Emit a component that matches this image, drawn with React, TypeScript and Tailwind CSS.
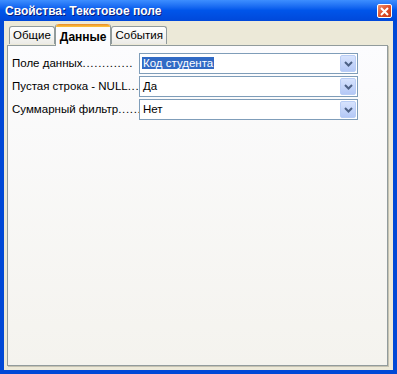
import React from "react";

const Chevron = () => (
  <svg width="9" height="6" viewBox="0 0 9 6">
    <polyline points="1,1 4.5,4.5 8,1" fill="none" stroke="#4D6185" strokeWidth="2" />
  </svg>
);

const Combo = ({ value, selected }: { value: string; selected?: boolean }) => (
  <div className="flex h-[21px] w-[219px] items-center border border-[#7F9DB9] bg-white pl-[2px] pr-[1px]">
    <div className="flex-1 overflow-hidden whitespace-nowrap">
      <span className={selected ? "bg-[#316AC5] px-[1px] text-white" : "px-[1px] text-black"}>{value}</span>
    </div>
    <div className="flex h-[17px] w-[16px] items-center justify-center rounded-[2px] border border-[#B9CDF5] bg-gradient-to-b from-[#D7E3FD] to-[#B4C8F6]">
      <Chevron />
    </div>
  </div>
);

const Row = ({ label, dots, value, selected }: { label: string; dots: string; value: string; selected?: boolean }) => (
  <div className="flex items-center">
    <div className="w-[127px] whitespace-nowrap pt-[1px] text-black">
      {label}
      <span className="tracking-[0.7px]">{dots}</span>
    </div>
    <Combo value={value} selected={selected} />
  </div>
);

export default function App() {
  return (
    <div
      className="flex h-[374px] w-[397px] flex-col overflow-hidden bg-[#0054E3] text-[11.5px]"
      style={{ fontFamily: '"Liberation Sans", Arial, sans-serif' }}
    >
      <div className="flex h-[21px] shrink-0 items-center justify-between bg-gradient-to-b from-[#3D8EFF] via-[#0055EA] to-[#0048DA] pl-[5px] pr-[5px]">
        <span className="text-[12px] font-bold text-white [text-shadow:1px_1px_0_#0A1E7A]">Свойства: Текстовое поле</span>
        <div className="mt-[1px] flex h-[14px] w-[15px] items-center justify-center rounded-[2px] border border-white bg-gradient-to-br from-[#F0906C] via-[#E0502A] to-[#C83A14]">
          <svg width="9" height="9" viewBox="0 0 9 9">
            <path d="M1 1 L8 8 M8 1 L1 8" stroke="white" strokeWidth="2" />
          </svg>
        </div>
      </div>
      <div className="flex flex-1 border-x-[4px] border-b-[4px] border-x-[#0048D6] border-b-[#0048D6]">
        <div className="flex flex-1 flex-col bg-[#ECE9D8] pb-[4px] pl-[3px] pr-[5px] pt-[2px]">
          <div className="relative z-10 flex h-[22px] items-end pl-[2px]">
            <div className="mb-[1px] flex h-[18px] items-center rounded-t-[3px] border border-b-0 border-[#919B9C] bg-gradient-to-b from-white to-[#ECEBE6] px-[3px] text-black">
              Общие
            </div>
            <div className="-mb-[1px] flex h-[22px] flex-col rounded-t-[3px] border-x border-[#919B9C] bg-[#FCFCFE]">
              <div className="h-[3px] rounded-t-[3px] bg-gradient-to-b from-[#E68B2C] to-[#FFC73C]" />
              <div className="flex flex-1 items-center px-[4px] text-[12px] font-bold text-black">Данные</div>
            </div>
            <div className="mb-[1px] flex h-[18px] items-center rounded-t-[3px] border border-b-0 border-[#919B9C] bg-gradient-to-b from-white to-[#ECEBE6] px-[3px] text-black">
              События
            </div>
          </div>
          <div className="flex flex-1 flex-col gap-[2px] border border-[#919B9C] bg-gradient-to-b from-[#FCFCFE] to-[#F4F3EE] pl-[4px] pt-[7px] shadow-[1px_1px_0_#C5C2B2]">
            <Row label="Поле данных" dots="............." value="Код студента" selected />
            <Row label="Пустая строка - NULL" dots="...." value="Да" />
            <Row label="Суммарный фильтр" dots="......" value="Нет" />
          </div>
        </div>
      </div>
    </div>
  );
}
